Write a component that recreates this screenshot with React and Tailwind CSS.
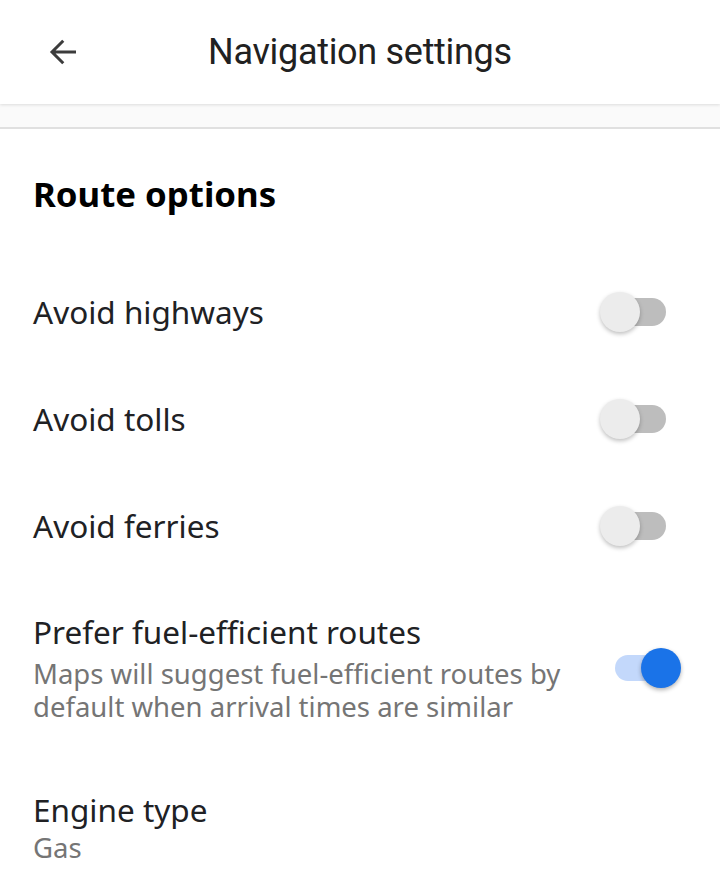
import React from "react";

function Toggle({ on }) {
  if (on) {
    return (
      <div className="relative w-[60px] h-[26px] rounded-full bg-[#c3d8fb] mr-[45px] shrink-0">
        <div className="absolute right-[-6px] top-1/2 -translate-y-1/2 w-[40px] h-[40px] rounded-full bg-[#1a73e8] shadow-[0_2px_4px_rgba(0,0,0,0.3)]" />
      </div>
    );
  }
  return (
    <div className="relative w-[60px] h-[28px] rounded-full bg-[#bdbdbd] mr-[54px] shrink-0">
      <div className="absolute left-[-6px] top-1/2 -translate-y-1/2 w-[40px] h-[40px] rounded-full bg-[#ececec] shadow-[0_2px_4px_rgba(0,0,0,0.25)]" />
    </div>
  );
}

function Row({ title, on }) {
  return (
    <div className="h-[107px] flex items-center justify-between pl-[33px] pb-[3px]">
      <span className="text-[31.5px] leading-[40px] text-[#202124]">{title}</span>
      <Toggle on={on} />
    </div>
  );
}

export default function App() {
  return (
    <div className="w-[720px] h-[892px] bg-white overflow-hidden" style={{ fontFamily: "'Noto Sans', Roboto, sans-serif" }}>
      {/* header */}
      <div className="relative z-10 h-[104px] flex items-center bg-white shadow-[0_1px_3px_rgba(0,0,0,0.12)]">
        <div className="w-[208px] pl-[46px]">
          <svg width="36" height="36" viewBox="0 0 24 24">
            <path d="M20 12H4.5M11.5 4.5L4 12l7.5 7.5" fill="none" stroke="#3c3c3c" strokeWidth="2" />
          </svg>
        </div>
        <h1 className="text-[36px] text-[#212121] tracking-[-0.3px] font-['Roboto']">Navigation settings</h1>
      </div>
      <div className="h-[25px] bg-[#fafafa] border-b-2 border-[#e0e0e0]" />

      <div className="pt-[45px] pb-[46px] pl-[33px]">
        <h2 className="text-[34.8px] leading-[40px] font-bold text-black">Route options</h2>
      </div>

      <Row title="Avoid highways" />
      <Row title="Avoid tolls" />
      <Row title="Avoid ferries" />

      <div className="flex items-center justify-between pl-[33px] pt-[31px]">
        <div>
          <div className="text-[31.5px] leading-[40px] text-[#202124]">Prefer fuel-efficient routes</div>
          <div className="mt-[5px] text-[27.5px] leading-[33px] text-[#757575] w-[570px]">
            Maps will suggest fuel-efficient routes by default when arrival times are similar
          </div>
        </div>
        <Toggle on />
      </div>

      <div className="pl-[33px] pt-[67px]">
        <div className="text-[31.5px] leading-[40px] text-[#202124]">Engine type</div>
        <div className="text-[27.5px] leading-[36px] text-[#757575]">Gas</div>
      </div>
    </div>
  );
}
